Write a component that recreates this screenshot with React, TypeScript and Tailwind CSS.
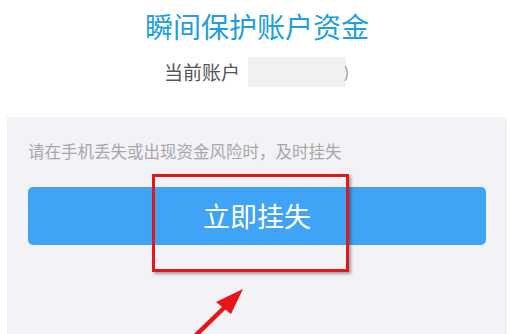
import React from "react"

const cjk = { fontFamily: '"Noto Sans CJK SC", "Noto Sans", sans-serif' }

export default function App() {
    return (
        <div className="relative w-[510px] h-[334px] bg-white overflow-hidden flex flex-col" style={cjk}>
            {/* Title */}
            <h1 className="pt-[8px] pl-[4px] text-center text-[28px] leading-[36px] font-normal text-[#20a0d8]">
                瞬间保护账户资金
            </h1>

            {/* Account row */}
            <div className="mt-[13px] h-[30px] flex justify-center items-center gap-[8px]">
                <span className="text-[19px] leading-[30px] text-[#555555]">当前账户</span>
                <span className="relative w-[98px] h-[30px] bg-[#f1f1f1] flex items-center justify-end">
                    <span className="-mr-[3px] text-[15px] text-[#8a8a8a]">)</span>
                </span>
            </div>

            {/* Panel */}
            <div className="mt-[30px] ml-[7px] mr-[3px] flex-1 bg-[#f3f3f7] pt-[22px] px-[21px]">
                <p className="text-[16.5px] leading-[24px] text-[#a8a8a8]">
                    请在手机丢失或出现资金风险时，及时挂失
                </p>
                <button className="mt-[24px] w-full h-[58px] rounded-[5px] bg-[#40a4f6] text-white text-[27px] leading-[58px] text-center">
                    立即挂失
                </button>
            </div>

            {/* Annotation box */}
            <div className="absolute left-[152px] top-[174px] w-[197px] h-[98px] border-[3px] border-[#e0181c] shadow-[2px_2px_3px_rgba(0,0,0,0.35)]" />

            {/* Annotation arrow */}
            <svg className="absolute left-0 top-0" width="510" height="334" viewBox="0 0 510 334">
                <line x1="193" y1="338" x2="227" y2="305" stroke="#e8141a" strokeWidth="4.5" />
                <polygon points="243,289 216,302 231,314" fill="#e8141a" />
            </svg>
        </div>
    )
}
